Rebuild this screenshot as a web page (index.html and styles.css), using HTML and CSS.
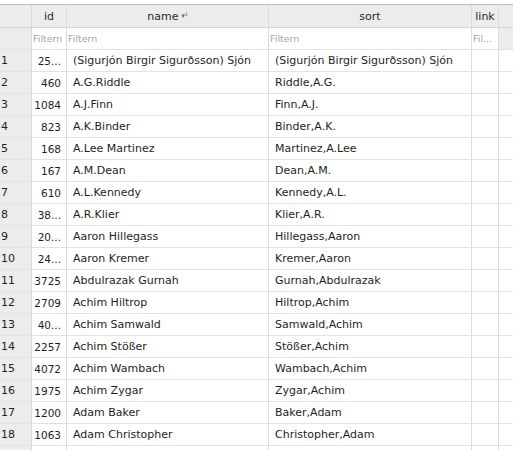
FILE: index.html
```html
<!DOCTYPE html>
<html>
<head>
<meta charset="utf-8">
<link rel="stylesheet" href="styles.css">
</head>
<body>
<div class="table">
  <div class="row head">
    <div class="cell num"></div>
    <div class="cell c">id</div>
    <div class="cell c">name <span class="sortmark">▾¹</span></div>
    <div class="cell c">sort</div>
    <div class="cell c">link</div>
    <div class="cell rest"></div>
  </div>
  <div class="row filter">
    <div class="cell num"></div>
    <div class="cell f">Filtern</div>
    <div class="cell f">Filtern</div>
    <div class="cell f">Filtern</div>
    <div class="cell f">Fil...</div>
    <div class="cell rest"></div>
  </div>
  <div class="row"><div class="cell num">1</div><div class="cell r">25...</div><div class="cell">(Sigurjón Birgir Sigurðsson) Sjón</div><div class="cell">(Sigurjón Birgir Sigurðsson) Sjón</div><div class="cell"></div><div class="cell rest"></div></div>
  <div class="row"><div class="cell num">2</div><div class="cell r">460</div><div class="cell">A.G.Riddle</div><div class="cell">Riddle,A.G.</div><div class="cell"></div><div class="cell rest"></div></div>
  <div class="row"><div class="cell num">3</div><div class="cell r">1084</div><div class="cell">A.J.Finn</div><div class="cell">Finn,A.J.</div><div class="cell"></div><div class="cell rest"></div></div>
  <div class="row"><div class="cell num">4</div><div class="cell r">823</div><div class="cell">A.K.Binder</div><div class="cell">Binder,A.K.</div><div class="cell"></div><div class="cell rest"></div></div>
  <div class="row"><div class="cell num">5</div><div class="cell r">168</div><div class="cell">A.Lee Martinez</div><div class="cell">Martinez,A.Lee</div><div class="cell"></div><div class="cell rest"></div></div>
  <div class="row"><div class="cell num">6</div><div class="cell r">167</div><div class="cell">A.M.Dean</div><div class="cell">Dean,A.M.</div><div class="cell"></div><div class="cell rest"></div></div>
  <div class="row"><div class="cell num">7</div><div class="cell r">610</div><div class="cell">A.L.Kennedy</div><div class="cell">Kennedy,A.L.</div><div class="cell"></div><div class="cell rest"></div></div>
  <div class="row"><div class="cell num">8</div><div class="cell r">38...</div><div class="cell">A.R.Klier</div><div class="cell">Klier,A.R.</div><div class="cell"></div><div class="cell rest"></div></div>
  <div class="row"><div class="cell num">9</div><div class="cell r">20...</div><div class="cell">Aaron Hillegass</div><div class="cell">Hillegass,Aaron</div><div class="cell"></div><div class="cell rest"></div></div>
  <div class="row"><div class="cell num">10</div><div class="cell r">24...</div><div class="cell">Aaron Kremer</div><div class="cell">Kremer,Aaron</div><div class="cell"></div><div class="cell rest"></div></div>
  <div class="row"><div class="cell num">11</div><div class="cell r">3725</div><div class="cell">Abdulrazak Gurnah</div><div class="cell">Gurnah,Abdulrazak</div><div class="cell"></div><div class="cell rest"></div></div>
  <div class="row"><div class="cell num">12</div><div class="cell r">2709</div><div class="cell">Achim Hiltrop</div><div class="cell">Hiltrop,Achim</div><div class="cell"></div><div class="cell rest"></div></div>
  <div class="row"><div class="cell num">13</div><div class="cell r">40...</div><div class="cell">Achim Samwald</div><div class="cell">Samwald,Achim</div><div class="cell"></div><div class="cell rest"></div></div>
  <div class="row"><div class="cell num">14</div><div class="cell r">2257</div><div class="cell">Achim Stößer</div><div class="cell">Stößer,Achim</div><div class="cell"></div><div class="cell rest"></div></div>
  <div class="row"><div class="cell num">15</div><div class="cell r">4072</div><div class="cell">Achim Wambach</div><div class="cell">Wambach,Achim</div><div class="cell"></div><div class="cell rest"></div></div>
  <div class="row"><div class="cell num">16</div><div class="cell r">1975</div><div class="cell">Achim Zygar</div><div class="cell">Zygar,Achim</div><div class="cell"></div><div class="cell rest"></div></div>
  <div class="row"><div class="cell num">17</div><div class="cell r">1200</div><div class="cell">Adam Baker</div><div class="cell">Baker,Adam</div><div class="cell"></div><div class="cell rest"></div></div>
  <div class="row"><div class="cell num">18</div><div class="cell r">1063</div><div class="cell">Adam Christopher</div><div class="cell">Christopher,Adam</div><div class="cell"></div><div class="cell rest"></div></div>
  <div class="row"><div class="cell num"></div><div class="cell r"></div><div class="cell"></div><div class="cell"></div><div class="cell"></div><div class="cell rest"></div></div>
</div>
</body>
</html>
```

FILE: styles.css
```css
html, body {
  margin: 0;
  padding: 0;
  background: #ffffff;
  overflow: hidden;
}
body {
  padding-top: 4px;
  font-family: "DejaVu Sans", "Liberation Sans", sans-serif;
  font-size: 11px;
  color: #1e1e1e;
}
.table {
  border-top: 1px solid #bdbdbd;
}
.row {
  display: grid;
  grid-template-columns: 32px 35px 202px 203px 27px 1fr;
  height: 22px;
  box-sizing: border-box;
  border-bottom: 1px solid #e2e2e2;
}
.row.head {
  height: 23px;
  background: #ececec;
  border-bottom: 1px solid #d4d4d4;
}
.row.filter {
  background: #ececec;
  border-bottom: 1px solid #e2e2e2;
}
.cell {
  box-sizing: border-box;
  border-right: 1px solid #dcdcdc;
  padding: 0 6px;
  display: flex;
  align-items: center;
  white-space: nowrap;
  overflow: hidden;
}
.cell.num {
  background: #ececec;
  padding: 0 1px;
  border-right: 1px solid #d8d8d8;
}
.cell.r {
  justify-content: flex-end;
  padding-right: 5px;
  font-size: 10.5px;
}
.cell.c {
  justify-content: center;
  color: #2a2a2a;
}
.cell.rest {
  border-right: none;
}
.row:not(.head):not(.filter) .cell.rest {
  background: #ffffff;
}
.cell.f {
  background: #ffffff;
  color: #a6a6a6;
  font-size: 9.5px;
  padding: 0 1px;
}
.sortmark {
  font-size: 7px;
  color: #666;
  margin-left: 3px;
}
```
